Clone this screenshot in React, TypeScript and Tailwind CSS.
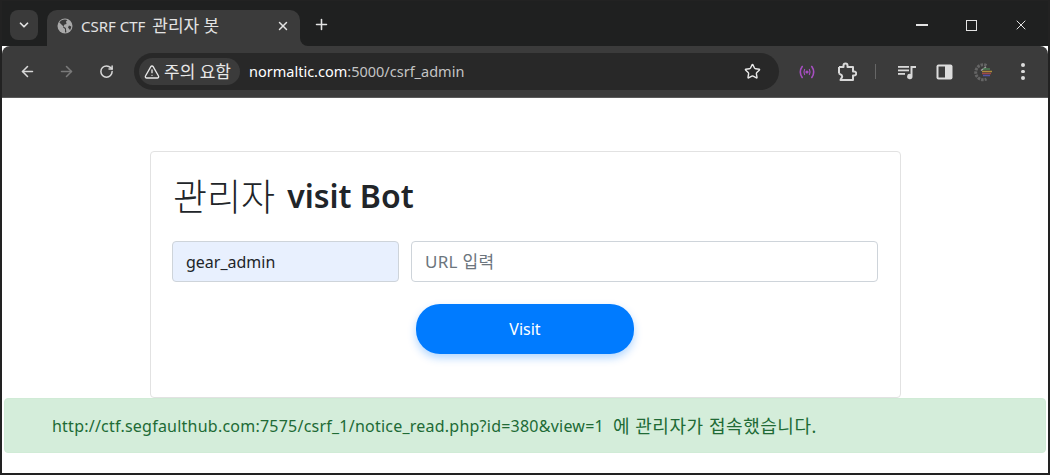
import React from "react";
import { ArrowLeft, ArrowRight, ChevronDown, Plus, RotateCw, Star, TriangleAlert, X } from "lucide-react";

const font = "font-['Noto_Sans','Noto_Sans_CJK_KR',sans-serif]";

const GlobeIcon = () => (
  <svg width="16" height="16" viewBox="0 0 16 16" className="shrink-0">
    <circle cx="8" cy="8" r="7.5" fill="#a9a9a9" />
    <path d="M8 1.5c-2.5 0-4.5 1.2-5.6 3L6 8l.2 1.6L8 11v3.4c.6.1 1 0 1.4-.1L8.8 10 6.4 8.6 7.5 6.5 9.5 6 9 3.5l1.5-1.4C9.7 1.7 8.9 1.5 8 1.5zM11 9.5l2 2.6c.7-1 1.2-2.4 1.2-3.6L12 7.5z" fill="#3b3b3b" />
  </svg>
);

const WaveIcon = () => (
  <svg width="16" height="16" viewBox="0 0 16 16" fill="none" stroke="#a64fc0" strokeWidth="1.6" strokeLinecap="round" className="shrink-0">
    <path d="M3.2 2.5C.8 6 .8 10 3.2 13.5M12.8 2.5c2.4 3.500 2.400 7.500 0 11" />
    <path d="M5.600 5.500c-.8 1.600-.8 3.400 0 5M10.400 5.500c.8 1.600.8 3.400 0 5" strokeWidth="1.200" />
    <circle cx="8" cy="8" r=".8" fill="#a64fc0" />
  </svg>
);

const ExtensionIcon = () => (
  <svg width="20" height="20" viewBox="0 0 20 20" fill="none" stroke="#d8d8d8" strokeWidth="2" strokeLinejoin="round" className="shrink-0">
    <path d="M2 5h4.500V3.500a2 2 0 0 1 4 0V5H16v4.500h1.200a2 2 0 0 1 0 4H16V18H3.500l1.200-2.200a2.300 2.300 0 0 0 0-2.600L2 11.500" />
    <path d="M2 5v6.500" />
  </svg>
);

const QueueIcon = () => (
  <svg width="18" height="16" viewBox="0 0 18 16" fill="#d8d8d8" className="shrink-0">
    <rect x="0" y="2" width="11" height="1.800" />
    <rect x="0" y="5.500" width="11" height="1.800" />
    <rect x="0" y="9" width="7" height="1.800" />
    <path d="M12.500 2H18v2h-3.500v8.500a2.700 2.700 0 1 1-2-2.600z" />
  </svg>
);

const SidePanelIcon = () => (
  <svg width="17" height="16" viewBox="0 0 17 16" className="shrink-0">
    <rect x="0.500" y="0.500" width="16" height="15" rx="2" fill="#dcdcdc" />
    <rect x="2.500" y="2.500" width="6.500" height="11" fill="#3b3b3b" />
  </svg>
);

const GearIcon = () => (
  <svg width="22" height="20" viewBox="0 0 22 20" fill="none" className="shrink-0 opacity-80">
    <path d="M13.500 3.500A7.500 7.500 0 1 0 13.500 17" stroke="#707070" strokeWidth="3" strokeDasharray="2.500 1" />
    <path d="M8 8.500 13 5" stroke="#b9b9b9" strokeWidth="1.500" />
    <path d="M10 7h7" stroke="#4f8f5a" strokeWidth="1.500" />
    <path d="M9 9.500h10" stroke="#c9a13b" strokeWidth="1.500" />
    <path d="M9 11.500h9" stroke="#bb4a4a" strokeWidth="1.500" />
    <path d="M10 13.500h7" stroke="#5a5ac0" strokeWidth="1.500" />
  </svg>
);

const App: React.FC = () => {
  return (
    <div className={`w-[1050px] h-[475px] flex flex-col overflow-hidden bg-white border-2 border-t border-[#222] ${font}`}>
      {/* tab strip */}
      <div className="h-[45px] shrink-0 bg-[#1f2020] flex items-end text-[#e3e3e3]">
        <div className="w-[28px] h-[30px] ml-2 mb-[6px] rounded-lg bg-[#3a3a3a] flex items-center justify-center">
          <ChevronDown size={14} strokeWidth={3} />
        </div>
        <div className="relative w-[253px] h-[36px] ml-[9px] rounded-t-[10px] bg-[#3b3b3b] flex items-center pl-[10px] pr-[10px] pb-[4px]">
          <GlobeIcon />
          <span className="ml-[8px] text-[15px] whitespace-nowrap">CSRF CTF <span className="ml-[3px] text-[17px] leading-none">관리자 봇</span></span>
          <X size={14} strokeWidth={2.5} className="ml-auto" />
          <span className="absolute -right-2 bottom-0 w-2 h-2 bg-[#3b3b3b]">
            <span className="block w-2 h-2 rounded-bl-lg bg-[#1f2020]" />
          </span>
        </div>
        <Plus size={17} strokeWidth={2.2} className="ml-[13px] mb-[13px]" />
        <div className="ml-auto flex items-center mb-[15px] pr-[21px] gap-[38px] h-[12px]">
          <div className="w-[12px] h-[1.500px] bg-[#e3e3e3]" />
          <div className="w-[11px] h-[11px] border-[1.500px] border-[#e3e3e3]" />
          <X size={16} strokeWidth={1.500} className="-mx-[2px]" />
        </div>
      </div>

      {/* toolbar */}
      <div className="h-[52px] shrink-0 bg-[#3b3b3b] border-b border-[#5a5a5a] rounded-t-lg flex items-center text-[#d8d8d8]">
        <ArrowLeft size={17} strokeWidth={2.2} className="ml-[17px]" />
        <ArrowRight size={17} strokeWidth={2.2} className="ml-[22px] text-[#7a7a7a]" />
        <RotateCw size={15} strokeWidth={2.4} className="ml-[24px]" />
        <div className="ml-[20px] w-[645px] h-[37px] rounded-full bg-[#282828] flex items-center pl-[5px]">
          <div className="w-[101px] h-[27px] pl-[5px] rounded-full bg-[#3b3b3b] flex items-center gap-[4px] text-[#e8e8e8]">
            <TriangleAlert size={16} strokeWidth={2} />
            <span className="text-[17px] leading-none whitespace-nowrap">주의 요함</span>
          </div>
          <span className="ml-[9px] text-[14.500px] text-[#c4c4c4]"><span className="text-white">normaltic.com</span>:5000/csrf_admin</span>
          <Star size={17} strokeWidth={2} className="ml-auto mr-[18px] text-[#e8e8e8]" />
        </div>
        <div className="ml-[20px]"><WaveIcon /></div>
        <div className="ml-[22px]"><ExtensionIcon /></div>
        <div className="w-px h-[15px] bg-[#666] ml-[18px]" />
        <div className="ml-[22px]"><QueueIcon /></div>
        <div className="ml-[20px]"><SidePanelIcon /></div>
        <div className="ml-[20px]"><GearIcon /></div>
        <div className="ml-[26px] flex flex-col gap-[3px]">
          <span className="w-[3.500px] h-[3.500px] rounded-full bg-[#dcdcdc]" />
          <span className="w-[3.500px] h-[3.500px] rounded-full bg-[#dcdcdc]" />
          <span className="w-[3.500px] h-[3.500px] rounded-full bg-[#dcdcdc]" />
        </div>
      </div>

      {/* page */}
      <div className="flex-1 flex flex-col pt-[53px]">
        <div className="w-[751px] h-[247px] shrink-0 ml-[148px] rounded border border-[#e2e2e2] px-[21px] pt-[20px]">
          <h1 className="h-[48px] text-[32px] leading-[48px] text-[#212529] whitespace-nowrap ml-px flex items-center">
            <span className="text-[37px] font-light leading-none">관리자</span>
            <span className="font-semibold ml-[12px]">visit Bot</span>
          </h1>
          <div className="flex gap-[12px] mt-[21px]">
            <input readOnly value="gear_admin" className="w-[227px] h-[41px] rounded border border-[#ced4da] bg-[#e8f0fe] px-[13px] text-[16px] text-[#212529]" />
            <input readOnly placeholder="URL 입력" className="w-[467px] h-[41px] rounded border border-[#ced4da] px-[13px] text-[17px] tracking-[0.300px] placeholder:text-[#6c757d]" />
          </div>
          <div className="flex justify-center mt-[22px]">
            <button className="w-[218px] h-[50px] mr-px rounded-[24px] bg-[#007bff] text-white text-[16px] shadow-[0_4px_8px_rgba(0,123,255,0.3)]">Visit</button>
          </div>
        </div>
        <div className="w-[1042px] h-[55px] shrink-0 ml-[2px] rounded bg-[#d4edda] border border-[#d0ebd6] flex items-center pl-[47px] text-[16px] text-[#206a35] whitespace-nowrap">
          <span className="tracking-[0.230px]">http://ctf.segfaulthub.com:7575/csrf_1/notice_read.php?id=380&amp;view=1</span>
          <span className="ml-[9px] text-[18px] leading-none tracking-[0.550px]">에 관리자가 접속했습니다.</span>
        </div>
      </div>
    </div>
  );
};

export default App;
